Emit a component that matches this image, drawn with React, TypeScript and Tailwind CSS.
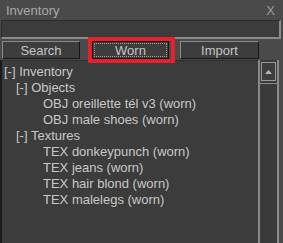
import React from "react";

const items: { text: string; indent: number }[] = [
  { text: "[-] Inventory", indent: 4 },
  { text: "[-] Objects", indent: 16 },
  { text: "OBJ oreillette tél v3 (worn)", indent: 43 },
  { text: "OBJ male shoes (worn)", indent: 43 },
  { text: "[-] Textures", indent: 16 },
  { text: "TEX donkeypunch (worn)", indent: 43 },
  { text: "TEX jeans (worn)", indent: 43 },
  { text: "TEX hair blond (worn)", indent: 43 },
  { text: "TEX malelegs (worn)", indent: 43 },
];

export default function App() {
  return (
    <div
      className="relative w-[283px] h-[243px] overflow-hidden bg-[#4a4a4a] flex flex-col text-[13px] leading-none"
      style={{ fontFamily: '"Liberation Sans", Arial, sans-serif' }}
    >
      {/* title bar */}
      <div className="h-[20px] flex items-center justify-between pl-[6px] pr-[8px] text-[#a8a8a8] shrink-0">
        <span className="text-[13px]">Inventory</span>
        <span className="text-[13px] text-[#9a9a9a]">X</span>
      </div>
      {/* search field */}
      <div className="ml-[1px] w-[280px] h-[19px] shrink-0 bg-[#3c3c3c] border-t border-l border-t-[#2a2a2a] border-l-[#2a2a2a] border-b-2 border-r-2 border-b-[#8a8a8a] border-r-[#8a8a8a]" />
      {/* tabs */}
      <div className="h-[21px] shrink-0 flex items-end pl-[2px] pb-[1px]">
        <div className="w-[78px] h-[18px] flex items-center justify-center bg-[#3d3d3d] text-[#c4c4c4] border-t border-l border-t-[#8a8a8a] border-l-[#8a8a8a] border-b border-r border-b-[#161616] border-r-[#161616]">
          Search
        </div>
        <div className="ml-[12px] w-[77px] h-[18px] flex items-center justify-center bg-[#3d3d3d] text-[#c4c4c4] border border-[#161616]">
          <div className="w-[73px] h-[14px] border border-dotted border-[#a0a0a0] flex items-center justify-center">
            Worn
          </div>
        </div>
        <div className="ml-[11px] w-[79px] h-[18px] flex items-center justify-center bg-[#3d3d3d] text-[#c4c4c4] border-t border-l border-t-[#8a8a8a] border-l-[#8a8a8a] border-b border-r border-b-[#161616] border-r-[#161616]">
          Import
        </div>
      </div>
      {/* tree panel */}
      <div className="flex-1 flex min-h-0">
        <div className="w-[258px] bg-[#3c3c3c] border-l-2 border-l-[#1a1a1a] border-t border-t-[#2e2e2e] pt-[2px] text-[#c8c8c8]">
          {items.map((it, i) => (
            <div
              key={i}
              className="h-[16px] flex items-center whitespace-nowrap"
              style={{ paddingLeft: it.indent - 2 }}
            >
              {it.text}
            </div>
          ))}
        </div>
        <div className="w-[21px] bg-[#3a3a3a] border-l-2 border-r-2 border-[#8a8a8a] flex flex-col pt-[2px]">
          <div className="h-[19px] mx-[1px] border border-[#9a9a9a] bg-[#3d3d3d] flex items-center justify-center">
            <svg width="7" height="4" viewBox="0 0 7 4">
              <polygon points="3.5,0 7,4 0,4" fill="#b8b8b8" />
            </svg>
          </div>
          <div className="mt-[2px] flex-1 border-t border-t-[#8a8a8a]" />
        </div>
        <div className="w-[2px] bg-[#4a4a4a]" />
      </div>
      {/* red highlight overlay */}
      <div className="absolute left-[88px] top-[37px] w-[87px] h-[26px] border-4 border-[#e8202a]" />
    </div>
  );
}
